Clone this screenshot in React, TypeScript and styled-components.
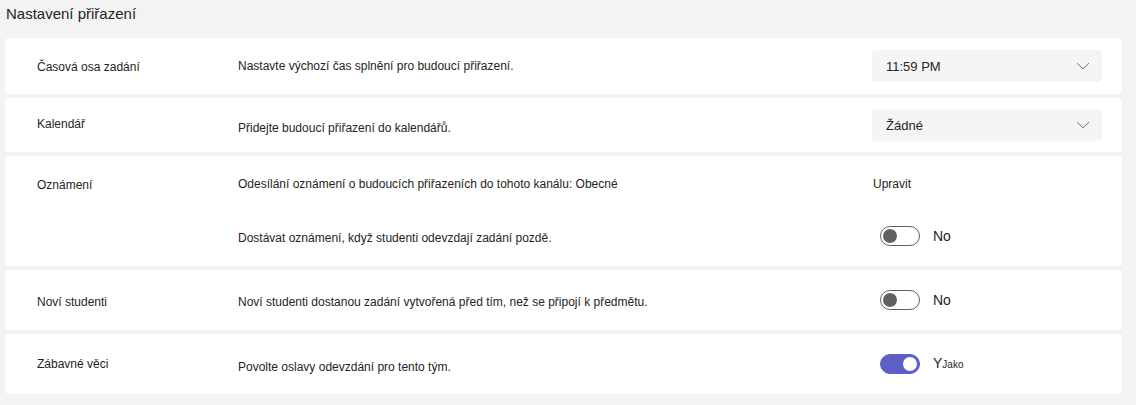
import React from "react";
import styled, { createGlobalStyle } from "styled-components";

const GlobalStyle = createGlobalStyle`
  html, body {
    margin: 0;
    padding: 0;
    background: #f3f3f3;
  }
  body {
    font-family: "Liberation Sans", Arial, sans-serif;
    color: #242424;
  }
`;

const Page = styled.div`
  width: 1136px;
  height: 405px;
  box-sizing: border-box;
  padding: 4px 14px 0 5px;
  background: #f3f3f3;
`;

const Title = styled.h1`
  margin: 0 0 15px 1px;
  height: 19px;
  font-size: 15px;
  font-weight: 400;
  line-height: 19px;
  color: #242424;
`;

const List = styled.div`
  display: flex;
  flex-direction: column;
  gap: 4px;
`;

const Card = styled.section<{ $pad: number; $rowGap?: number }>`
  display: grid;
  grid-template-columns: 201px 1fr 230px;
  align-items: center;
  row-gap: ${(p) => p.$rowGap ?? 0}px;
  padding: ${(p) => p.$pad}px 20px ${(p) => p.$pad}px 32px;
  background: #ffffff;
  border-radius: 4px;
`;

const Label = styled.div<{ $shift?: number }>`
  font-size: 12px;
  line-height: 16px;
  transform: translateY(${(p) => p.$shift ?? 0}px);
`;

const Description = styled.div<{ $shift?: number }>`
  font-size: 12px;
  line-height: 16px;
  transform: translateY(${(p) => p.$shift ?? 0}px);
`;

const Select = styled.div`
  display: flex;
  align-items: center;
  justify-content: space-between;
  height: 32px;
  padding: 0 12px 0 14px;
  box-sizing: border-box;
  background: #f5f5f5;
  border-radius: 4px;
  font-size: 13px;
`;

const Chevron = () => (
  <svg width="14" height="8" viewBox="0 0 14 8" fill="none">
    <path d="M1 1.2 L7 6.8 L13 1.2" stroke="#707070" strokeWidth="1" />
  </svg>
);

const LinkText = styled.div`
  font-size: 12px;
  line-height: 16px;
  padding-left: 1px;
`;

const ToggleRow = styled.div`
  display: flex;
  align-items: center;
  gap: 13px;
  padding-left: 8px;
  height: 20px;
`;

const Track = styled.div<{ $on: boolean }>`
  position: relative;
  width: 40px;
  height: 20px;
  box-sizing: border-box;
  border-radius: 10px;
  border: 1px solid ${(p) => (p.$on ? "#5b5fc7" : "#616161")};
  background: ${(p) => (p.$on ? "#5b5fc7" : "#ffffff")};
`;

const Knob = styled.span<{ $on: boolean }>`
  position: absolute;
  top: 2px;
  left: ${(p) => (p.$on ? "22px" : "2px")};
  width: 14px;
  height: 14px;
  border-radius: 50%;
  background: ${(p) => (p.$on ? "#ffffff" : "#616161")};
`;

const StateText = styled.span`
  font-size: 14px;
  line-height: 20px;
`;

const SmallText = styled.span`
  font-size: 10px;
`;

const Toggle = ({ on, children }: { on: boolean; children: React.ReactNode }) => (
  <ToggleRow>
    <Track $on={on}>
      <Knob $on={on} />
    </Track>
    <StateText>{children}</StateText>
  </ToggleRow>
);

export default function App() {
  return (
    <>
      <GlobalStyle />
      <Page>
        <Title>Nastavení přiřazení</Title>
        <List>
          <Card $pad={12}>
            <Label $shift={1}>Časová osa zadání</Label>
            <Description>Nastavte výchozí čas splnění pro budoucí přiřazení.</Description>
            <Select>
              <span>11:59 PM</span>
              <Chevron />
            </Select>
          </Card>

          <Card $pad={11}>
            <Label $shift={-1}>Kalendář</Label>
            <Description $shift={3}>Přidejte budoucí přiřazení do kalendářů.</Description>
            <Select>
              <span>Žádné</span>
              <Chevron />
            </Select>
          </Card>

          <Card $pad={20} $rowGap={34}>
            <Label $shift={1}>Oznámení</Label>
            <Description>
              Odesílání oznámení o budoucích přiřazeních do tohoto kanálu: Obecné
            </Description>
            <LinkText>Upravit</LinkText>
            <span />
            <Description $shift={2}>
              Dostávat oznámení, když studenti odevzdají zadání pozdě.
            </Description>
            <Toggle on={false}>No</Toggle>
          </Card>

          <Card $pad={20}>
            <Label $shift={2}>Noví studenti</Label>
            <Description $shift={2}>
              Noví studenti dostanou zadání vytvořená před tím, než se připojí k předmětu.
            </Description>
            <Toggle on={false}>No</Toggle>
          </Card>

          <Card $pad={20}>
            <Label>Zábavné věci</Label>
            <Description $shift={3}>Povolte oslavy odevzdání pro tento tým.</Description>
            <Toggle on={true}>
              Y<SmallText>Jako</SmallText>
            </Toggle>
          </Card>
        </List>
      </Page>
    </>
  );
}
